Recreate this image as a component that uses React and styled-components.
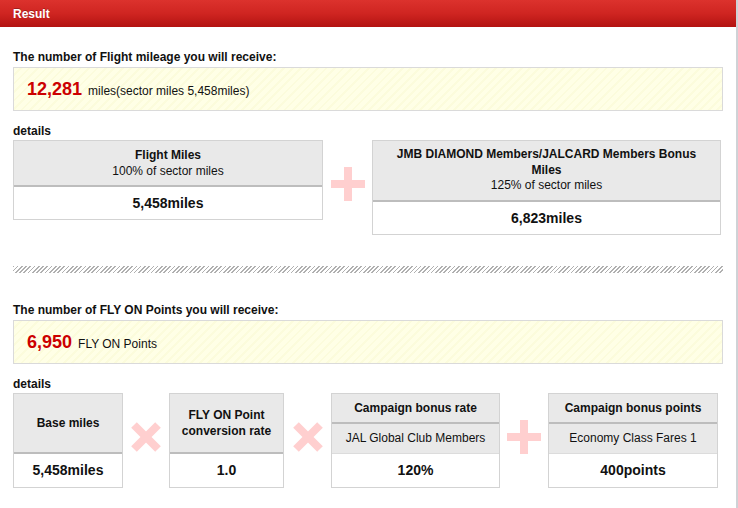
import React from 'react';
import styled, { createGlobalStyle } from 'styled-components';

const GlobalStyle = createGlobalStyle`
  html, body {
    margin: 0;
    padding: 0;
    background: #fff;
  }
  body {
    font-family: "Liberation Sans", Arial, Helvetica, sans-serif;
    color: #111;
  }
`;

const Page = styled.div`
  width: 736px;
  min-height: 508px;
  border-right: 2px solid #cfd2d6;
  background: #fff;
`;

const TitleBar = styled.div`
  height: 27px;
  display: flex;
  align-items: center;
  padding: 0 13px;
  background: linear-gradient(to bottom, #dc322d 0%, #cf2521 50%, #b31311 100%);
  color: #fff;
  font-size: 12px;
  font-weight: bold;
  text-shadow: 0 -1px 0 rgba(0, 0, 0, 0.25);
`;

const Content = styled.div`
  padding: 22px 13px 0 13px;
`;

const SectionTitle = styled.div`
  font-size: 12px;
  font-weight: bold;
  line-height: 16px;
  margin-bottom: 2px;
`;

const Total = styled.div`
  height: 44px;
  box-sizing: border-box;
  border: 1px solid #dadada;
  background: repeating-linear-gradient(135deg, #ffffe6 0 4px, #fcfcdc 4px 6px);
  padding: 0 13px;
  line-height: 42px;
  font-size: 12px;
`;

const BigNumber = styled.span`
  color: #cc0000;
  font-size: 18px;
  font-weight: bold;
  margin-right: 6px;
`;

const Label = styled.div`
  font-size: 12px;
  font-weight: bold;
  line-height: 16px;
  margin: 12px 0 1px;
`;

const Row = styled.div`
  display: flex;
  align-items: ${p => (p.$stretch ? 'stretch' : 'flex-start')};
`;

const Card = styled.div`
  width: ${p => p.$w}px;
  box-sizing: border-box;
  border: 1px solid #d3d3d3;
  display: flex;
  flex-direction: column;
  text-align: center;
`;

const Head = styled.div`
  flex: 1;
  display: flex;
  flex-direction: column;
  justify-content: center;
  background: #e9e9e9;
  border-bottom: 2px solid #bdbdbd;
  padding: 6px 8px;
  font-size: 12px;
  line-height: ${p => (p.$tight ? '15.5px' : '16px')};
  min-height: ${p => p.$min || 0}px;
  box-sizing: border-box;
`;

const HeadTitle = styled.div`
  font-weight: bold;
`;

const Sub = styled.div`
  background: #e9e9e9;
  border-bottom: 1px solid #dcdcdc;
  height: 29px;
  line-height: 29px;
  font-size: 12px;
`;

const Value = styled.div`
  height: ${p => p.$h || 32}px;
  line-height: ${p => p.$h || 32}px;
  font-size: 14px;
  font-weight: bold;
  background: #fff;
`;

const Operator = styled.div`
  width: ${p => p.$w}px;
  align-self: stretch;
  display: flex;
  align-items: center;
  justify-content: center;
  padding-bottom: 6px;
  box-sizing: border-box;
`;

const Divider = styled.div`
  height: 7px;
  margin: 31px 0 29px;
  background: repeating-linear-gradient(135deg, #b0b0b0 0 1.2px, #fff 1.2px 3px);
`;

const Plus = () => (
  <svg width="34" height="34" viewBox="0 0 34 34">
    <rect x="0" y="13" width="34" height="8" fill="#ffcfcf" />
    <rect x="13" y="0" width="8" height="34" fill="#ffcfcf" />
  </svg>
);

const Times = () => (
  <svg width="30" height="30" viewBox="0 0 30 30">
    <line x1="3" y1="3" x2="27" y2="27" stroke="#ffcfcf" strokeWidth="8" />
    <line x1="27" y1="3" x2="3" y2="27" stroke="#ffcfcf" strokeWidth="8" />
  </svg>
);

export default function App() {
  return (
    <Page>
      <GlobalStyle />
      <TitleBar>Result</TitleBar>
      <Content>
        <SectionTitle>The number of Flight mileage you will receive:</SectionTitle>
        <Total>
          <BigNumber>12,281</BigNumber>miles(sector miles 5,458miles)
        </Total>

        <Label>details</Label>
        <Row>
          <Card $w={310}>
            <Head>
              <HeadTitle>Flight Miles</HeadTitle>
              <div>100% of sector miles</div>
            </Head>
            <Value>5,458miles</Value>
          </Card>
          <Operator $w={49}>
            <Plus />
          </Operator>
          <Card $w={349}>
            <Head $tight>
              <HeadTitle>JMB DIAMOND Members/JALCARD Members Bonus Miles</HeadTitle>
              <div>125% of sector miles</div>
            </Head>
            <Value>6,823miles</Value>
          </Card>
        </Row>

        <Divider />

        <SectionTitle>The number of FLY ON Points you will receive:</SectionTitle>
        <Total>
          <BigNumber>6,950</BigNumber>FLY ON Points
        </Total>

        <Label>details</Label>
        <Row $stretch>
          <Card $w={110}>
            <Head>
              <HeadTitle>Base miles</HeadTitle>
            </Head>
            <Value $h={33}>5,458miles</Value>
          </Card>
          <Operator $w={46}>
            <Times />
          </Operator>
          <Card $w={115}>
            <Head>
              <HeadTitle>FLY ON Point conversion rate</HeadTitle>
            </Head>
            <Value $h={33}>1.0</Value>
          </Card>
          <Operator $w={47}>
            <Times />
          </Operator>
          <Card $w={169}>
            <Head $min={30}>
              <HeadTitle>Campaign bonus rate</HeadTitle>
            </Head>
            <Sub>JAL Global Club Members</Sub>
            <Value $h={33}>120%</Value>
          </Card>
          <Operator $w={48}>
            <Plus />
          </Operator>
          <Card $w={170}>
            <Head $min={30}>
              <HeadTitle>Campaign bonus points</HeadTitle>
            </Head>
            <Sub>Economy Class Fares 1</Sub>
            <Value $h={33}>400points</Value>
          </Card>
        </Row>
      </Content>
    </Page>
  );
}
